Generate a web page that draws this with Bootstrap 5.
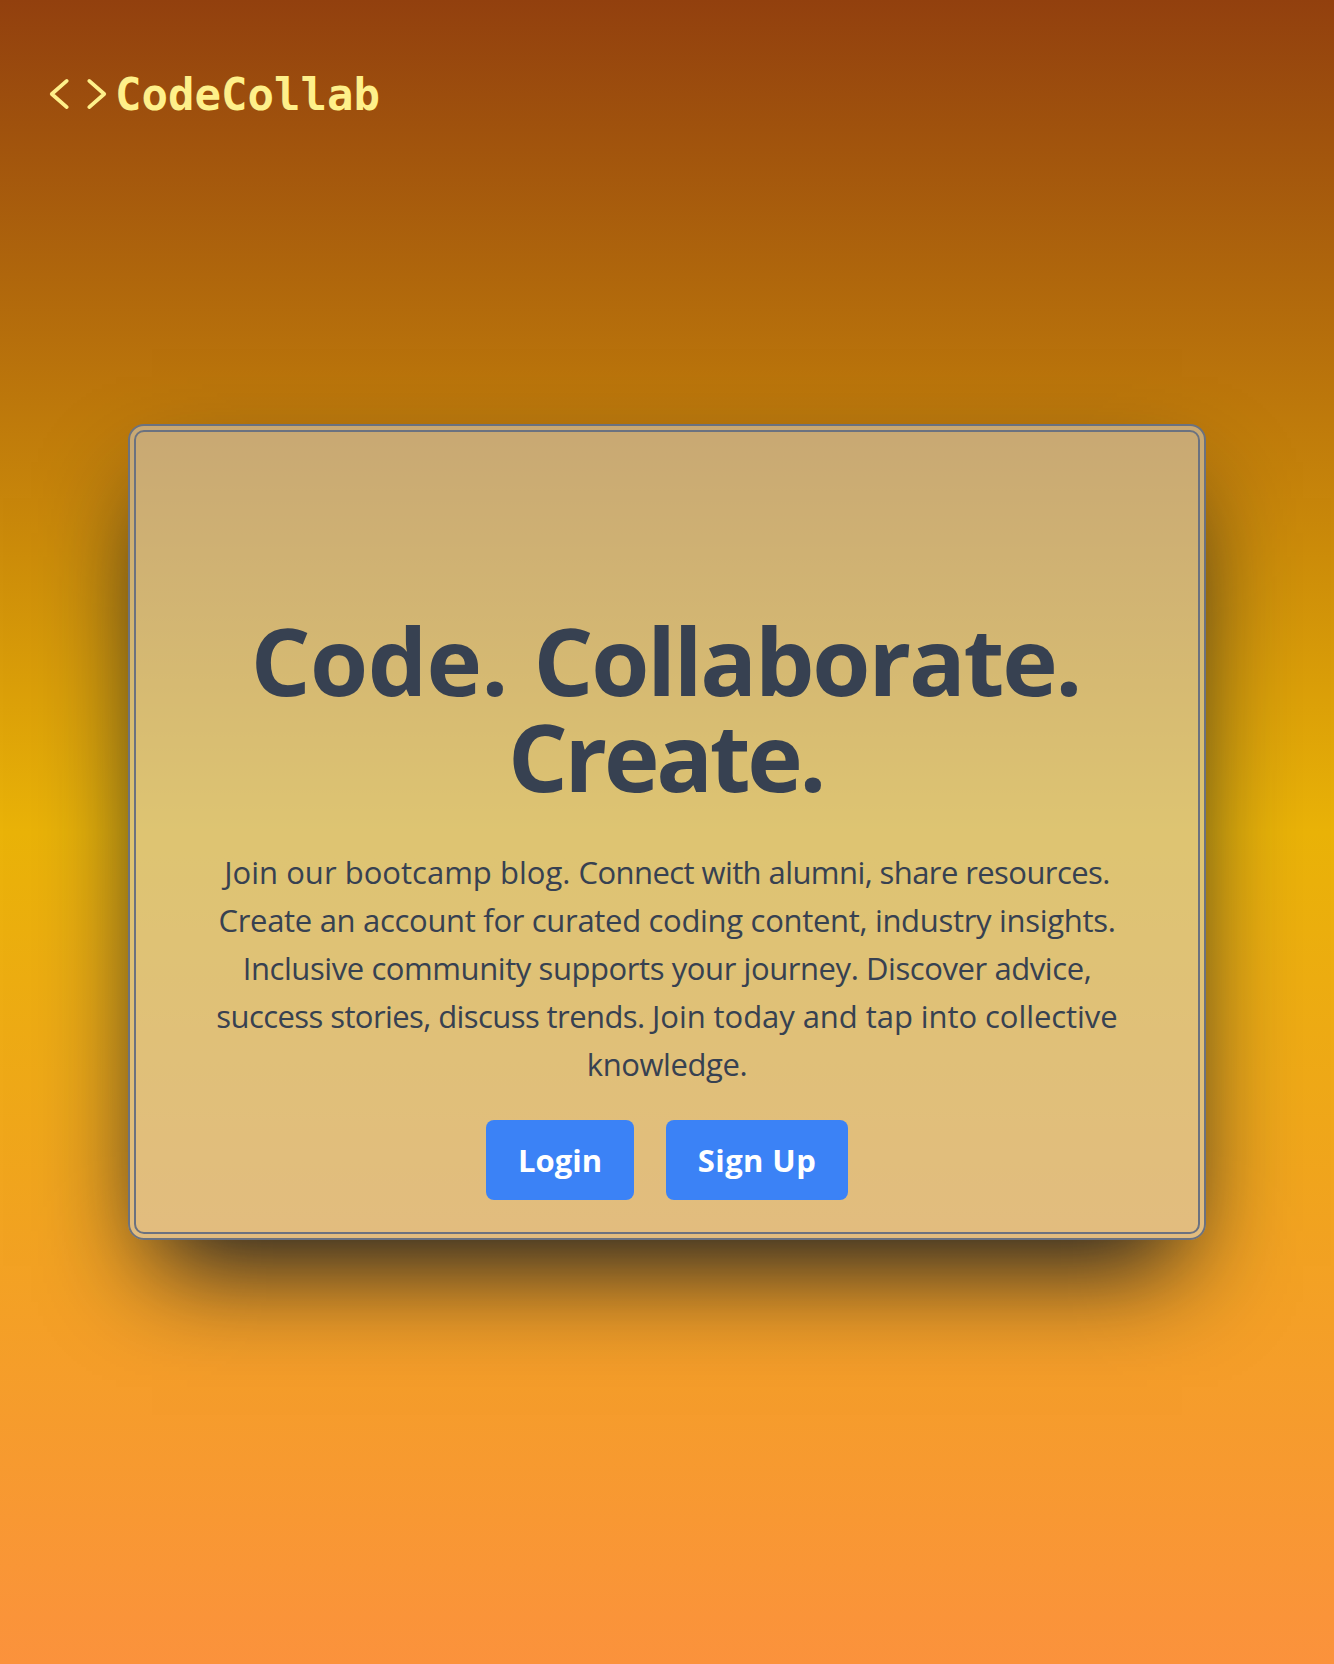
<!DOCTYPE html>
<html lang="en">
<head>
<meta charset="utf-8">
<meta name="viewport" content="width=device-width, initial-scale=1">
<title>CodeCollab</title>
<link href="https://cdn.jsdelivr.net/npm/bootstrap@5.3.0/dist/css/bootstrap.min.css" rel="stylesheet">
<style>
body{font-family:"Open Sans","Noto Sans",sans-serif;color:#374151}
.page{min-height:1664px;background:linear-gradient(to bottom,#92400e,#eab308,#fb923c)}
.site-head{padding:64px 48px 0;color:#fef08a}
.brand{font:700 44px/60px "DejaVu Sans Mono",monospace;margin:1px 0 -1px 7px}
.hero{margin:300px 128px 0;padding:4px;border:2px solid #6b7280;border-radius:16px;background:rgba(209,213,219,.5);box-shadow:0 50px 100px -24px #111827}
.hero-in{height:804px;border:2px solid #6b7280;border-radius:10px;padding:180px 64px 32px}
.hero h1{font-size:94px;line-height:96px;font-weight:700;margin:0 0 44px}
.hero h1 .d-block{padding-right:3px}
.ls-code{letter-spacing:-.6px;word-spacing:2px}
.ls-collab{letter-spacing:-2.15px}
.ls-create{letter-spacing:-3.3px}
.hero p{font-size:31px;line-height:48px;margin:0 0 32px;letter-spacing:-.31px}
.ls-wide{letter-spacing:.02px}
.ls-soft{letter-spacing:-.06px}
.ls-snug{letter-spacing:-.42px}
.ls-tight{letter-spacing:-.58px}
.cta{height:80px;padding:0 32px;border:0;border-radius:8px;background:#3b82f6;color:#fff;font-size:31px;font-weight:700}
.cta:hover{background:#1d4ed8;color:#fff}
.cta-group{gap:32px}
.cta-login{width:148px}
.cta-signup{width:182px;padding:0;letter-spacing:.4px}
</style>
</head>
<body>
<div class="page d-flex flex-column">
  <header class="site-head d-flex align-items-center">
    <svg width="60" height="60" viewBox="0 0 512 512" fill="none" stroke="currentColor" stroke-width="32" stroke-linecap="round" stroke-linejoin="round" aria-hidden="true"><path d="M160 368 32 256l128-112M352 368l128-112-128-112"/></svg>
    <span class="brand">CodeCollab</span>
  </header>
  <main class="hero">
    <div class="hero-in text-center d-flex flex-column align-items-center">
      <h1>
        <span class="d-block text-nowrap"><span class="ls-code">Code. </span><span class="ls-collab">Collaborate.</span></span>
        <span class="d-block ls-create">Create.</span>
      </h1>
      <p class="text-nowrap">
        <span class="d-block"><span class="ls-wide">Join our bootcamp blog. </span><span class="ls-tight">Connect with alumni, share resources.</span></span>
        <span class="d-block">Create an account for curated coding content, industry insights.</span>
        <span class="d-block ls-snug">Inclusive community supports your journey. Discover advice,</span>
        <span class="d-block"><span class="ls-tight">success stories, discuss trends. </span><span class="ls-soft">Join today and tap into collective</span></span>
        <span class="d-block ls-snug">knowledge.</span>
      </p>
      <div class="d-flex cta-group">
        <button type="button" class="btn cta cta-login">Login</button>
        <button type="button" class="btn cta cta-signup">Sign Up</button>
      </div>
    </div>
  </main>
</div>
<script src="https://cdn.jsdelivr.net/npm/bootstrap@5.3.0/dist/js/bootstrap.bundle.min.js"></script>
</body>
</html>
